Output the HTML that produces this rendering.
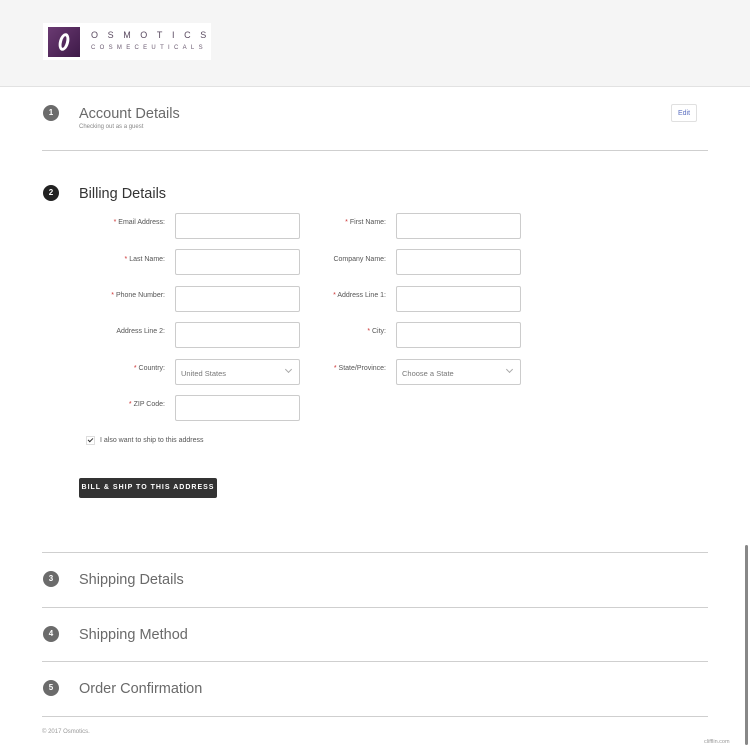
<!DOCTYPE html>
<html><head><meta charset="utf-8"><style>
*{margin:0;padding:0;box-sizing:border-box}
body{width:750px;height:748px;position:relative;background:#fff;font-family:"Liberation Sans",sans-serif;overflow:hidden;color:#666}
.a{position:absolute}
.hdr{left:0;top:0;width:750px;height:87px;background:#f5f5f5;border-bottom:1px solid #e2e2e2}
.logo{left:43px;top:23px;width:168px;height:37px;background:#fff}
.sq{left:5px;top:4px;width:32px;height:30px;background:linear-gradient(135deg,#6a3a72,#3e1a48)}
.circ{width:16px;height:16px;border-radius:50%;background:#6b6b6b;color:#fff;font-size:8px;line-height:16px;text-align:center;font-weight:bold}
.title{font-size:14.5px;color:#6a6a6a}
.line{left:42px;width:666px;height:1px;background:#cfcfcf}
.lbl{font-size:7px;color:#555;text-align:right;width:120px}
.lbl b{color:#c33;font-weight:normal}
.inp{width:125px;height:26px;border:1px solid #ccc;border-radius:2px;background:#fff;font-size:7.5px;color:#777;padding:9px 5px}
.chev{position:absolute;right:8px;top:7px;width:5px;height:5px;border-right:1px solid #aaa;border-bottom:1px solid #aaa;transform:rotate(45deg)}
</style></head><body>
<div class="a hdr"></div>
<div class="a logo">
 <div class="a sq"><div class="a" style="left:11px;top:6px;width:10px;height:18px;border:3px solid #fff;border-radius:50%;transform:rotate(15deg)"></div></div>
 <div class="a" style="left:48px;top:7px;font-size:9px;letter-spacing:9.6px;color:#5a4a60;white-space:nowrap">OSMOTICS</div>
 <div class="a" style="left:48px;top:22px;font-size:6px;letter-spacing:4.3px;color:#6a5a70;white-space:nowrap">COSMECEUTICALS</div>
</div>

<div class="a circ" style="left:43px;top:105px">1</div>
<div class="a title" style="left:79px;top:106px">Account Details</div>
<div class="a" style="left:79px;top:124px;font-size:6px;color:#888">Checking out as a guest</div>
<div class="a" style="left:671px;top:104px;width:26px;height:18px;border:1px solid #e0e0e0;border-radius:2px;font-size:7px;color:#5b6fc0;text-align:center;line-height:18px">Edit</div>
<div class="a line" style="top:150px"></div>

<div class="a circ" style="left:43px;top:185px;background:#222">2</div>
<div class="a title" style="left:79px;top:186px;color:#333">Billing Details</div>

<div class="a lbl" style="left:45px;top:219px"><b>*</b> Email Address:</div>
<div class="a inp" style="left:175px;top:213px"></div>
<div class="a lbl" style="left:266px;top:219px"><b>*</b> First Name:</div>
<div class="a inp" style="left:396px;top:213px"></div>

<div class="a lbl" style="left:45px;top:256px"><b>*</b> Last Name:</div>
<div class="a inp" style="left:175px;top:249px"></div>
<div class="a lbl" style="left:266px;top:256px">Company Name:</div>
<div class="a inp" style="left:396px;top:249px"></div>

<div class="a lbl" style="left:45px;top:292px"><b>*</b> Phone Number:</div>
<div class="a inp" style="left:175px;top:286px"></div>
<div class="a lbl" style="left:266px;top:292px"><b>*</b> Address Line 1:</div>
<div class="a inp" style="left:396px;top:286px"></div>

<div class="a lbl" style="left:45px;top:328px">Address Line 2:</div>
<div class="a inp" style="left:175px;top:322px"></div>
<div class="a lbl" style="left:266px;top:328px"><b>*</b> City:</div>
<div class="a inp" style="left:396px;top:322px"></div>

<div class="a lbl" style="left:45px;top:365px"><b>*</b> Country:</div>
<div class="a inp" style="left:175px;top:359px">United States<div class="chev"></div></div>
<div class="a lbl" style="left:266px;top:365px"><b>*</b> State/Province:</div>
<div class="a inp" style="left:396px;top:359px">Choose a State<div class="chev"></div></div>

<div class="a lbl" style="left:45px;top:401px"><b>*</b> ZIP Code:</div>
<div class="a inp" style="left:175px;top:395px"></div>

<div class="a" style="left:86px;top:436px;width:9px;height:9px;border:1px solid #ddd;background:#fff"><div class="a" style="left:2px;top:0px;width:3px;height:5px;border-right:1.5px solid #333;border-bottom:1.5px solid #333;transform:rotate(45deg)"></div></div>
<div class="a" style="left:100px;top:437px;font-size:7px;color:#555">I also want to ship to this address</div>

<div class="a" style="left:79px;top:478px;width:138px;height:20px;background:#333;border-radius:2px;color:#fff;font-size:7px;font-weight:bold;letter-spacing:1px;text-align:center;line-height:20px;white-space:nowrap">BILL &amp; SHIP TO THIS ADDRESS</div>

<div class="a line" style="top:552px"></div>
<div class="a circ" style="left:43px;top:571px">3</div>
<div class="a title" style="left:79px;top:572px">Shipping Details</div>
<div class="a line" style="top:607px"></div>
<div class="a circ" style="left:43px;top:626px">4</div>
<div class="a title" style="left:79px;top:627px">Shipping Method</div>
<div class="a line" style="top:661px"></div>
<div class="a circ" style="left:43px;top:680px">5</div>
<div class="a title" style="left:79px;top:681px">Order Confirmation</div>
<div class="a line" style="top:716px"></div>
<div class="a" style="left:42px;top:729px;font-size:6px;color:#999">© 2017 Osmotics.</div>
<div class="a" style="left:704px;top:739px;font-size:5.5px;color:#999">clifflin.com</div>
<div class="a" style="left:745px;top:545px;width:3px;height:200px;background:#888;border-radius:2px"></div>
</body></html>
